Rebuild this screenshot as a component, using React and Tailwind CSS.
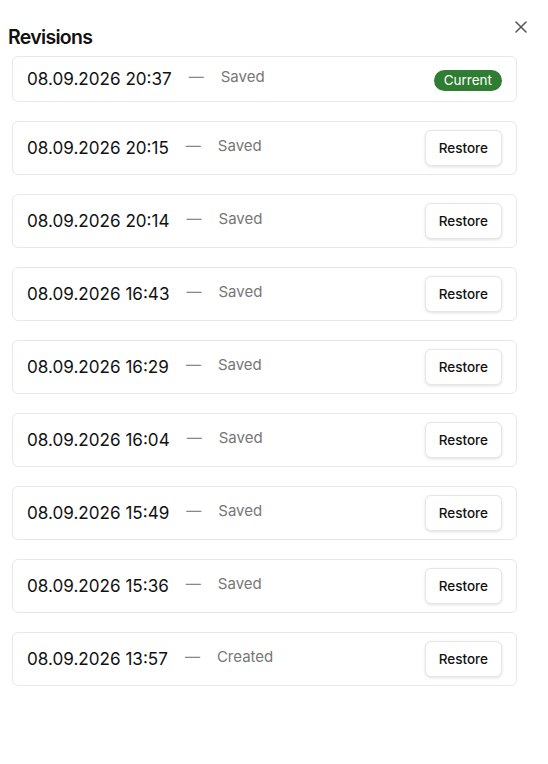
import React from "react";

const rows = [
  ["08.09.2026 20:15", "Saved"],
  ["08.09.2026 20:14", "Saved"],
  ["08.09.2026 16:43", "Saved"],
  ["08.09.2026 16:29", "Saved"],
  ["08.09.2026 16:04", "Saved"],
  ["08.09.2026 15:49", "Saved"],
  ["08.09.2026 15:36", "Saved"],
  ["08.09.2026 13:57", "Created"],
];

function Row({ date, status, current }) {
  return (
    <div className="flex items-center rounded-md border border-[#e8e8e8] bg-white px-[14px] py-2">
      <span className="text-[17.1px] leading-7 text-[#111]">{date}</span>
      <span className="ml-[17px] text-[15px] text-[#888] -translate-y-[2px]">—</span>
      <span className="ml-[17px] text-[15px] text-[#777] -translate-y-[2px]">{status}</span>
      <div className="ml-auto">
        {current ? (
          <span className="inline-flex h-[21px] items-center rounded-full bg-[#2e7d32] px-[10px] text-[13.5px] text-white">
            Current
          </span>
        ) : (
          <button className="h-9 rounded-md border border-[#e6e6e6] bg-white px-[13px] text-[13.5px] font-medium text-[#111] shadow-[0_1px_3px_rgba(0,0,0,0.12)]">
            Restore
          </button>
        )}
      </div>
    </div>
  );
}

export default function App() {
  return (
    <div className="h-[764px] w-[548px] bg-white pl-2 pr-[21px] font-['Inter',sans-serif]">
      <div className="flex items-start justify-between pt-[20px]">
        <h1 className="mt-[3px] text-[19.5px] font-semibold leading-7 tracking-[-0.7px] text-[#111]">
          Revisions
        </h1>
        <button className="mt-[1px] text-[#555]" aria-label="Close">
          <svg width="12" height="12" viewBox="0 0 12 12" fill="none" stroke="currentColor" strokeWidth="1.5" strokeLinecap="round">
            <path d="M1 1l10 10M11 1L1 11" />
          </svg>
        </button>
      </div>
      <div className="mt-[5px] flex flex-col gap-[19px] pl-1 pr-[10px]">
        <Row date="08.09.2026 20:37" status="Saved" current />
        {rows.map(([d, s]) => (
          <Row key={d} date={d} status={s} />
        ))}
      </div>
    </div>
  );
}
